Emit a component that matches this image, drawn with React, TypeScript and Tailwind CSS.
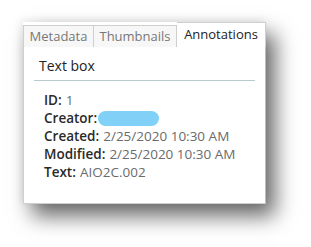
import React from "react";

const rows: { label: string; value: string }[] = [
  { label: "ID:", value: "1" },
  { label: "Creator:", value: "" },
  { label: "Created:", value: "2/25/2020 10:30 AM" },
  { label: "Modified:", value: "2/25/2020 10:30 AM" },
  { label: "Text:", value: "AIO2C.002" },
];

export default function App() {
  return (
    <div
      className="w-[311px] h-[247px] bg-white pl-[23px] pt-[22px] overflow-hidden"
      style={{ fontFamily: '"Open Sans", "Noto Sans", sans-serif' }}
    >
      <div className="w-[243px] bg-white shadow-[9px_12px_20px_rgba(0,0,0,0.6),-2px_-2px_8px_rgba(0,0,0,0.08)]">
        {/* tabs */}
        <div className="flex items-end h-[25px] text-[13px] bg-white">
          <div className="w-[71px] h-[22px] flex items-center justify-center bg-[#f7f7f7] border border-[#cfcfcf] border-b-0 text-[#777]">
            Metadata
          </div>
          <div className="w-[83px] h-[22px] flex items-center justify-center bg-[#f7f7f7] border border-[#cfcfcf] border-b-0 border-l-0 text-[#777]">
            Thumbnails
          </div>
          <div className="flex-1 h-[25px] flex items-center justify-center bg-white border border-[#cfcfcf] border-b-0 border-l-0 text-[#222]">
            Annotations
          </div>
        </div>
        {/* body */}
        <div className="h-[157px] border border-t-0 border-[#cfcfcf] border-r-[#bdbdbd] px-[10px] pt-[8px]">
          <div className="text-[14px] text-[#222] pl-[5px] h-[24px] leading-[22px]">
            Text box
          </div>
          <div className="h-px bg-[#b7c8d0] mt-[1px]" />
          <div className="pl-[10px] pt-[10px] text-[13.5px] leading-[18px]">
            {rows.map((r) => (
              <div key={r.label} className="flex items-center">
                <span className="text-[#2a2a2a] font-semibold">{r.label}</span>
                {r.label === "Creator:" ? (
                  <span className="ml-[1px] inline-block w-[61px] h-[15px] rounded-full bg-[#80d0f8]" />
                ) : (
                  <span className="ml-[4px] text-[#6b6b6b]">{r.value}</span>
                )}
              </div>
            ))}
          </div>
        </div>
      </div>
    </div>
  );
}
